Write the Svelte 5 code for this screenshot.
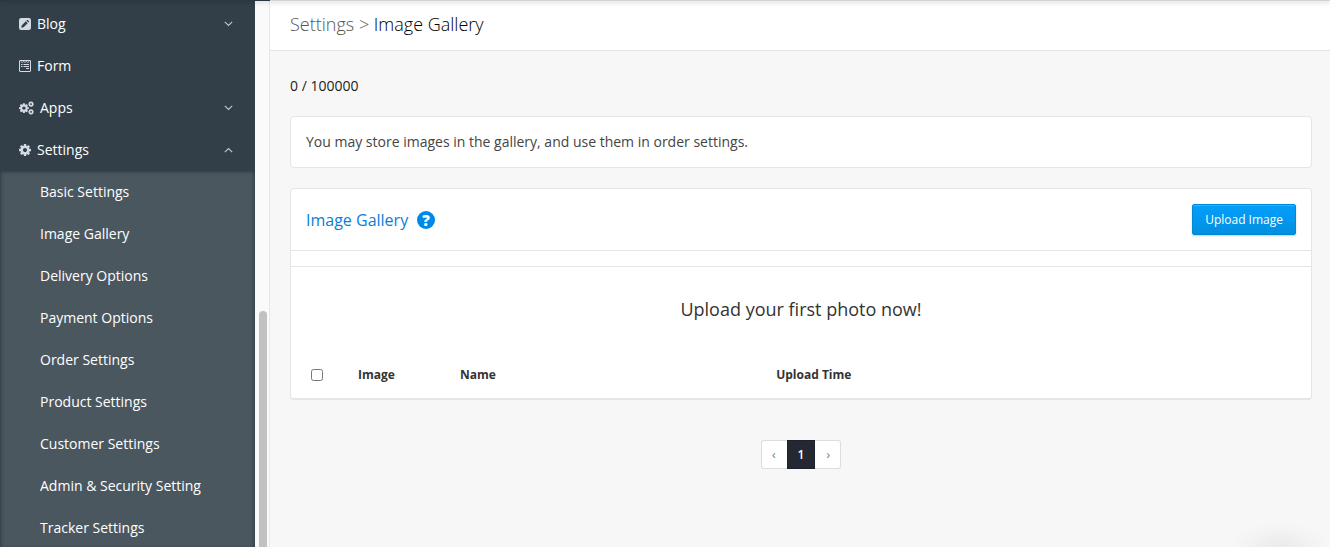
<script lang="ts">
  const menu = [
    { icon: 'pencil', label: 'Blog', arrow: true },
    { icon: 'form', label: 'Form', arrow: false },
    { icon: 'cogs', label: 'Apps', arrow: true },
    { icon: 'cog', label: 'Settings', arrow: true }
  ];

  const settingsMenu = [
    'Basic Settings',
    'Image Gallery',
    'Delivery Options',
    'Payment Options',
    'Order Settings',
    'Product Settings',
    'Customer Settings',
    'Admin & Security Setting',
    'Tracker Settings'
  ];

  const cogPath =
    'M1024 896q0-106-75-181t-181-75-181 75-75 181 75 181 181 75 181-75 75-181zm512-109v222q0 12-8 23t-20 13l-185 28q-19 54-39 91 35 50 107 138 10 12 10 25t-9 23q-27 37-99 108t-94 71q-12 0-26-9l-138-108q-44 23-91 38-16 136-29 186-7 28-36 28h-222q-14 0-24.5-8.5t-11.5-21.5l-28-184q-49-16-90-37l-141 107q-10 9-25 9-14 0-25-11-126-114-165-168-7-10-7-23 0-12 8-23 15-21 51-66.5t54-70.5q-27-50-41-99l-183-27q-13-2-21-12.5t-8-23.5v-222q0-12 8-23t19-13l186-28q14-46 39-92-40-57-107-138-10-12-10-24 0-10 9-23 26-36 98.5-107.5t94.5-71.5q13 0 26 10l138 107q44-23 91-38 16-136 29-186 7-28 36-28h222q14 0 24.5 8.5t11.5 21.5l28 184q49 16 90 37l142-107q9-9 24-9 13 0 25 10 129 119 165 170 7 8 7 22 0 12-8 23-15 21-51 66.5t-54 70.5q26 50 41 98l183 28q13 2 21 12.5t8 23.5z';

  let settingsOpen = $state(true);
  let allSelected = $state(false);

  function toggle(label: string) {
    if (label === 'Settings') settingsOpen = !settingsOpen;
  }
</script>

{#snippet menuIcon(name: string)}
  {#if name === 'pencil'}
    <svg width="12" height="12" viewBox="0 0 12 12" aria-hidden="true">
      <rect width="12" height="12" rx="2.2" fill="#d5d9e2" />
      <path d="M2.2 9.8 L2.7 7.4 L6.8 3.3 L8.7 5.2 L4.6 9.3 Z M7.4 2.7 L8 2.1 Q8.4 1.8 8.8 2.1 L9.9 3.2 Q10.2 3.6 9.9 4 L9.3 4.6 Z" fill="#323f48" />
    </svg>
  {:else if name === 'form'}
    <svg width="12" height="12" viewBox="0 0 12 12" fill="none" stroke="#d5d9e2" aria-hidden="true">
      <rect x="0.5" y="0.5" width="11" height="11" rx="0.4" />
      <path d="M1.5 1 L3.2 2.6 L4.7 1.2 L6 2.6 L7.3 1.2 L8.8 2.6 L10.5 1" stroke-width="0.9" />
      <path d="M2 4.5h1.5M4.5 4.5h5.5M2 6.5h1.5M4.5 6.5h5.5M7 8.5h3" />
    </svg>
  {:else if name === 'cogs'}
    <svg width="15" height="14" viewBox="0 0 15 14" fill="#d5d9e2" aria-hidden="true">
      <path d={cogPath} transform="translate(0 1.4) scale(0.0064)" />
      <path d={cogPath} transform="translate(9.2 -0.2) scale(0.0037)" />
      <path d={cogPath} transform="translate(9.2 7.6) scale(0.0037)" />
    </svg>
  {:else}
    <svg width="12" height="14" viewBox="0 0 1536 1792" fill="#d5d9e2" aria-hidden="true">
      <path d={cogPath} />
    </svg>
  {/if}
{/snippet}

<div class="app">
  <div class="topbar"></div>

  <nav class="sidebar">
    {#each menu as item}
      <button class="menu-item" onclick={() => toggle(item.label)}>
        {@render menuIcon(item.icon)}
        <span class="menu-label">{item.label}</span>
        {#if item.arrow}
          <svg class="arrow" class:up={item.label === 'Settings' && settingsOpen} width="9" height="6" viewBox="0 0 9 6" aria-hidden="true">
            <path d="M0.8 0.9 L4.5 4.5 L8.2 0.9" fill="none" stroke="#c3c9d0" stroke-width="1.1" />
          </svg>
        {/if}
      </button>
    {/each}
    {#if settingsOpen}
      <ul class="submenu">
        {#each settingsMenu as label}
          <li><a href="#settings">{label}</a></li>
        {/each}
      </ul>
    {/if}
  </nav>

  <div class="scroll-track">
    <div class="scroll-thumb"></div>
  </div>

  <main>
    <header>
      <h1><a href="#settings">Settings</a> <span>&gt;</span> Image Gallery</h1>
    </header>

    <div class="content">
      <p class="count">0 / 100000</p>

      <p class="notice">You may store images in the gallery, and use them in order settings.</p>

      <section class="panel">
        <div class="panel-head">
          <h2>Image Gallery</h2>
          <a class="help" href="#help" aria-label="Help">?</a>
          <button class="upload">Upload Image</button>
        </div>
        <div class="toolbar"></div>
        <p class="empty">Upload your first photo now!</p>
        <table>
          <thead>
            <tr>
              <th class="check"><input type="checkbox" aria-label="Select all" bind:checked={allSelected} /></th>
              <th class="image">Image</th>
              <th class="name">Name</th>
              <th>Upload Time</th>
            </tr>
          </thead>
        </table>
      </section>

      <div class="pager">
        <button>‹</button>
        <button class="current">1</button>
        <button>›</button>
      </div>
    </div>
  </main>

  <div class="chat-glow"></div>
</div>

<style>
  :global(body) {
    margin: 0;
  }

  .app {
    position: relative;
    display: flex;
    height: 100vh;
    overflow: hidden;
    background: #f7f7f7;
    color: #222;
    font-family: 'Open Sans', 'Noto Sans', sans-serif;
    font-size: 14px;
    line-height: 20px;
  }

  button {
    font-family: inherit;
    cursor: pointer;
  }

  a {
    color: inherit;
    text-decoration: none;
  }

  p, h1, h2 {
    margin: 0;
  }

  /* bottom edge of the fixed bar, lies over all columns */
  .topbar {
    position: absolute;
    top: 0;
    left: 0;
    right: 0;
    height: 1px;
    background: linear-gradient(to right, #2b3640 270px, #d3d3d5 270px);
    box-shadow: 0 1px 4px rgba(0, 0, 0, 0.4);
    z-index: 2;
  }

  .sidebar {
    flex: 0 0 255px;
    box-sizing: border-box;
    padding-top: 3px;
    background: #323f48;
    color: #fff;
  }

  .menu-item {
    display: flex;
    align-items: center;
    width: 100%;
    height: 42px;
    padding: 0 22px 0 19px;
    border: 0;
    background: none;
    color: #fff;
    font-size: 14px;
    font-weight: 500;
    line-height: 20px;
  }

  .menu-label {
    flex: 1;
    padding-left: 6px;
    text-align: left;
  }

  .arrow.up {
    transform: rotate(180deg);
  }

  .submenu {
    margin: 0;
    padding: 0;
    list-style: none;
    background: #4b575f;
    box-shadow: inset 0 0 4px rgba(0, 0, 0, 0.5);
  }

  .submenu a {
    display: block;
    padding-left: 40px;
    font-weight: 500;
    line-height: 42px;
  }

  .scroll-track {
    flex: 0 0 15px;
    box-sizing: border-box;
    padding: 311px 2px 0 4px;
    border-right: 1px solid #e8e8e8;
    background: #fafafa;
  }

  .scroll-thumb {
    height: 100%;
    border-radius: 4px 4px 0 0;
    background: #c1c1c1;
  }

  main {
    flex: 1;
    min-width: 0;
  }

  header {
    padding: 12px 20px 13px;
    border-bottom: 1px solid #e4e4e4;
    background: #fff;
  }

  h1 {
    color: #000;
    font-size: 18px;
    font-weight: 300;
    line-height: 25px;
  }

  h1 a,
  h1 span {
    color: #555;
  }

  .content {
    padding: 25px 18px 0 20px;
  }

  .notice {
    margin-top: 20px;
    padding: 15px;
    border: 1px solid #e5e5e5;
    border-radius: 4px;
    background: #fff;
    color: #444;
  }

  .panel {
    margin-top: 20px;
    padding-bottom: 1px;
    border: 1px solid #e5e5e5;
    border-bottom-width: 2px;
    border-radius: 4px;
    background: #fff;
  }

  .panel-head {
    display: flex;
    align-items: center;
    padding: 15px;
    border-bottom: 1px solid #e5e5e5;
  }

  h2 {
    color: #0a7ed9;
    font-size: 16px;
    font-weight: 400;
  }

  .help {
    width: 18px;
    height: 18px;
    margin-left: 9px;
    border-radius: 50%;
    background: #0088e8;
    color: #fff;
    font-size: 15px;
    font-weight: 800;
    line-height: 18px;
    text-align: center;
  }

  .upload {
    height: 31px;
    margin-left: auto;
    padding: 0 12px;
    border: 1px solid #0087d6;
    border-radius: 2px;
    background: linear-gradient(#039ffb, #028fe0);
    box-shadow: inset 0 1px 0 rgba(255, 255, 255, 0.2), 0 1px 2px rgba(0, 0, 0, 0.2);
    color: #fff;
    font-size: 12px;
    font-weight: 500;
  }

  .toolbar {
    height: 15px;
    border-bottom: 1px solid #e5e5e5;
  }

  .empty {
    padding: 30px 0;
    color: #333;
    font-size: 18px;
    line-height: 25px;
    text-align: center;
  }

  table {
    width: 100%;
    border-collapse: collapse;
    table-layout: fixed;
  }

  th {
    height: 45px;
    padding: 0;
    color: #333;
    font-size: 12px;
    font-weight: 700;
    text-align: left;
  }

  .check {
    width: 67px;
  }

  .image {
    width: 10%;
  }

  .name {
    width: 31%;
  }

  .check input {
    display: block;
    width: 12px;
    height: 12px;
    margin: 0 0 0 20px;
  }

  .pager {
    display: flex;
    justify-content: center;
    margin-top: 40px;
  }

  .pager button {
    height: 29px;
    padding: 0 10px;
    border: 1px solid #ddd;
    background: #fff;
    color: #777;
    font-size: 12px;
  }

  .pager button:first-child {
    padding-right: 11px;
    border-right: 0;
    border-radius: 3px 0 0 3px;
  }

  .pager button:last-child {
    padding-left: 11px;
    border-left: 0;
    border-radius: 0 3px 3px 0;
  }

  .pager .current {
    border-color: #1c212b;
    background: #232832;
    color: #fff;
    font-weight: 600;
  }

  .chat-glow {
    position: absolute;
    right: 0;
    bottom: 0;
    width: 100px;
    height: 25px;
    background: radial-gradient(ellipse at 50% 100%, rgba(0, 0, 0, 0.05), transparent 70%);
    pointer-events: none;
  }
</style>
